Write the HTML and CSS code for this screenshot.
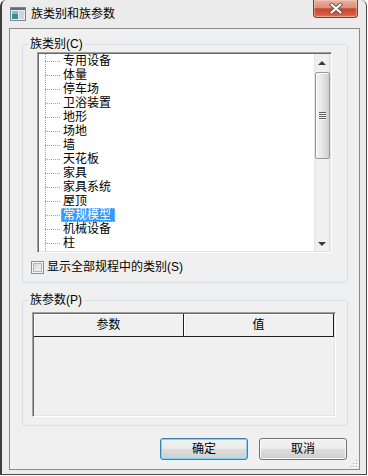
FILE: index.html
```html
<!DOCTYPE html>
<html lang="zh-CN">
<head>
    <meta charset="UTF-8">
    <title>族类别和族参数</title>
    <link rel="stylesheet" href="styles.css">
</head>
<body>
    <div class="window">
        <div class="titlebar">
            <svg class="app-icon" width="16" height="16" viewBox="0 0 16 16">
                <rect x="0.5" y="1.5" width="15" height="13" fill="#e8ecef" stroke="#7b8794"/>
                <rect x="1" y="2" width="14" height="2" fill="#5d6f7d"/>
                <rect x="2" y="5" width="6" height="8" fill="#3f8a94"/>
                <rect x="2" y="5" width="6" height="3" fill="#7cc0c4"/>
                <rect x="9" y="5" width="5" height="8" fill="#cdd6dc"/>
            </svg>
            <span class="title">族类别和族参数</span>
            <div class="close-btn">
                <svg width="14" height="11" viewBox="0 0 14 11">
                    <path d="M2.5 1.5 L11.5 9.5 M11.5 1.5 L2.5 9.5" stroke="#5b5b5b" stroke-width="4" stroke-linecap="round"/>
                    <path d="M2.5 1.5 L11.5 9.5 M11.5 1.5 L2.5 9.5" stroke="#ffffff" stroke-width="2" stroke-linecap="round"/>
                </svg>
            </div>
        </div>

        <div class="client">
            <fieldset class="group group-cats">
                <legend>族类别(C)</legend>
                <div class="listbox">
                    <ul class="tree">
                        <li><span class="branch"></span><span class="node">专用设备</span></li>
                        <li><span class="branch"></span><span class="node">体量</span></li>
                        <li><span class="branch"></span><span class="node">停车场</span></li>
                        <li><span class="branch"></span><span class="node">卫浴装置</span></li>
                        <li><span class="branch"></span><span class="node">地形</span></li>
                        <li><span class="branch"></span><span class="node">场地</span></li>
                        <li><span class="branch"></span><span class="node">墙</span></li>
                        <li><span class="branch"></span><span class="node">天花板</span></li>
                        <li><span class="branch"></span><span class="node">家具</span></li>
                        <li><span class="branch"></span><span class="node">家具系统</span></li>
                        <li><span class="branch"></span><span class="node">屋顶</span></li>
                        <li><span class="branch"></span><span class="node selected">常规模型</span></li>
                        <li><span class="branch"></span><span class="node">机械设备</span></li>
                        <li><span class="branch"></span><span class="node">柱</span></li>
                    </ul>
                    <div class="vscroll">
                        <div class="sb-btn sb-up"></div>
                        <div class="sb-thumb"><span class="grip"></span></div>
                        <div class="sb-track"></div>
                        <div class="sb-btn sb-down"></div>
                    </div>
                </div>
                <label class="check-row">
                    <span class="checkbox"></span>
                    显示全部规程中的类别(S)
                </label>
            </fieldset>

            <fieldset class="group group-params">
                <legend>族参数(P)</legend>
                <div class="listview">
                    <div class="lv-header">
                        <div class="lv-col">参数</div>
                        <div class="lv-col">值</div>
                    </div>
                    <div class="lv-body"></div>
                </div>
            </fieldset>

            <div class="buttons">
                <button class="btn btn-default">确定</button>
                <button class="btn">取消</button>
            </div>

            <svg class="size-grip" width="8" height="8" viewBox="0 0 8 8">
                <rect x="6" y="0" width="1" height="1" fill="#a3a3a3"/>
                <rect x="3" y="3" width="1" height="1" fill="#a3a3a3"/>
                <rect x="6" y="3" width="1" height="1" fill="#a3a3a3"/>
                <rect x="0" y="6" width="1" height="1" fill="#a3a3a3"/>
                <rect x="3" y="6" width="1" height="1" fill="#a3a3a3"/>
                <rect x="6" y="6" width="1" height="1" fill="#a3a3a3"/>
                <rect x="7" y="1" width="1" height="1" fill="#fff"/>
                <rect x="4" y="4" width="1" height="1" fill="#fff"/>
                <rect x="7" y="4" width="1" height="1" fill="#fff"/>
                <rect x="1" y="7" width="1" height="1" fill="#fff"/>
                <rect x="4" y="7" width="1" height="1" fill="#fff"/>
                <rect x="7" y="7" width="1" height="1" fill="#fff"/>
            </svg>
        </div>
    </div>
</body>
</html>
```

FILE: styles.css
```css
* {
    margin: 0;
    padding: 0;
    box-sizing: border-box;
}

body {
    width: 368px;
    height: 476px;
    overflow: hidden;
    background: #fff;
    font-family: "Liberation Sans", "Noto Sans CJK SC", sans-serif;
    font-size: 12px;
    color: #000;
}

/* window frame */
.window {
    width: 367px;
    height: 475px;
    background: #ececec;
    border-left: 2px solid #3e3e3e;
    border-right: 1px solid #4a4a4a;
    border-bottom: 1px solid #4a4a4a;
    border-radius: 6px 6px 0 0;
    padding: 0 6px 4px 7px;
    display: flex;
    flex-direction: column;
}

.titlebar {
    height: 28px;
    display: flex;
    align-items: center;
    margin-left: -7px;
    margin-right: -6px;
    padding-left: 8px;
}

.app-icon {
    display: block;
    margin-top: -1px;
}

.title {
    margin-left: 5px;
    line-height: 14px;
}

.close-btn {
    margin-left: auto;
    margin-right: 8px;
    align-self: flex-start;
    width: 45px;
    height: 18px;
    border: 1px solid #8a3a2c;
    border-top: none;
    border-radius: 0 0 4px 4px;
    background: linear-gradient(#eab1a3 0%, #dc8f7d 45%, #c9462e 52%, #d65a3f 85%, #e27a5c 100%);
    box-shadow: inset 0 0 0 1px rgba(255, 220, 210, 0.45);
    display: flex;
    align-items: center;
    justify-content: center;
}

.close-btn svg {
    display: block;
}

.client {
    position: relative;
    height: 442px;
    background: #f0f0f0;
    border: 1px solid #8b8b8b;
    display: flex;
    flex-direction: column;
}

/* group boxes */
.group {
    border: 1px solid #d5dfe5;
    border-radius: 3px;
    min-width: 0;
}

.group legend {
    margin-left: 5px;
    padding: 0 2px;
    line-height: 14px;
    height: 14px;
}

.group-cats {
    margin: 8px 11px 0 12px;
    padding: 0 0 8px 0;
}

.group-params {
    margin: 10px 11px 0 12px;
    padding: 0 0 8px 0;
}

/* tree list */
.listbox {
    margin: 1px 15px 0 14px;
    height: 201px;
    border: 1px solid;
    border-color: #a0a0a0 #ffffff #ffffff #a0a0a0;
    padding: 1px;
    box-shadow: inset 1px 1px 0 #696969, inset -1px -1px 0 #e3e3e3;
    background: #fff;
    display: flex;
}

.tree {
    flex: 1;
    list-style: none;
    padding-left: 6px;
    background-image: linear-gradient(#a0a0a0 50%, transparent 50%);
    background-size: 1px 2px;
    background-position: 6px 0;
    background-repeat: repeat-y;
    background-color: #fff;
}

.tree li {
    height: 14px;
    display: flex;
    align-items: center;
}

.branch {
    width: 16px;
    height: 14px;
    background-image: linear-gradient(to right, #a0a0a0 50%, transparent 50%);
    background-size: 2px 1px;
    background-position: 0 7px;
    background-repeat: repeat-x;
}

.node {
    padding: 0 4px 0 2px;
    line-height: 14px;
    height: 14px;
    white-space: nowrap;
}

.node.selected {
    background: #3399ff;
    color: #fff;
    outline: 1px dotted #9ccbff;
    outline-offset: -1px;
}

/* scrollbar */
.vscroll {
    width: 16px;
    display: flex;
    flex-direction: column;
    background: linear-gradient(to right, #e3e3e3 0, #f0f0f0 2px, #f0f0f0 13px, #e6e6e6 100%);
}

.sb-btn {
    display: flex;
    align-items: center;
    justify-content: center;
}

.sb-up {
    height: 18px;
}

.sb-down {
    height: 17px;
}

.sb-up::after,
.sb-down::after {
    content: '';
    width: 0;
    height: 0;
    border-left: 4px solid transparent;
    border-right: 4px solid transparent;
}

.sb-up::after {
    border-bottom: 4px solid #3a3a3a;
}

.sb-down::after {
    border-top: 4px solid #3a3a3a;
    margin-top: 2px;
}

.sb-thumb {
    height: 87px;
    margin-left: 1px;
    border: 1px solid #989898;
    border-radius: 2px;
    background: linear-gradient(to right, #f4f4f4 0%, #e9e9e9 40%, #d8d8d8 80%, #cbcbcb 100%);
    box-shadow: inset 1px 1px 0 #fbfbfb;
    display: flex;
    align-items: center;
    justify-content: center;
}

.grip {
    width: 7px;
    height: 8px;
    background: repeating-linear-gradient(#5c5c5c 0 1px, #f6f6f6 1px 2px);
}

.sb-track {
    flex: 1;
}

/* checkbox */
.check-row {
    margin: 8px 0 0 8px;
    height: 13px;
    display: flex;
    align-items: center;
    line-height: 13px;
}

.checkbox {
    width: 13px;
    height: 13px;
    border: 1px solid #8e8f8f;
    background: linear-gradient(135deg, #cfcfcf 0%, #e6e6e6 50%, #f7f7f7 100%);
    box-shadow: inset 0 0 0 1px #f4f4f4, inset 0 0 0 2px #b3b6b9;
    margin-right: 3px;
    flex-shrink: 0;
}

/* parameter list view */
.listview {
    margin: 5px 11px 0 9px;
    height: 105px;
    border: 1px solid;
    border-color: #a0a0a0 #ffffff #ffffff #a0a0a0;
    padding: 1px;
    box-shadow: inset 1px 1px 0 #696969, inset -1px -1px 0 #e3e3e3;
    background: #f0f0f0;
    display: flex;
    flex-direction: column;
}

.lv-header {
    height: 23px;
    display: flex;
    border-bottom: 1px solid #1e1e1e;
}

.lv-col {
    width: 150px;
    text-align: center;
    line-height: 22px;
    border-right: 1px solid #1e1e1e;
    box-shadow: inset 1px 1px 0 #ffffff;
}

.lv-body {
    flex: 1;
}

/* buttons */
.buttons {
    margin: 12px 12px 0 0;
    display: flex;
    justify-content: flex-end;
    gap: 11px;
}

.btn {
    width: 88px;
    height: 22px;
    font-family: inherit;
    font-size: 12px;
    color: #000;
    border: 1px solid #707070;
    border-radius: 3px;
    background: linear-gradient(#f2f2f2 0%, #ebebeb 48%, #dddddd 52%, #cfcfcf 100%);
    box-shadow: inset 0 0 0 1px #fbfbfb;
    line-height: 18px;
}

.btn-default {
    border-color: #3c7fb1;
    box-shadow: inset 0 0 0 1px #7fd3f7;
}

.size-grip {
    position: absolute;
    right: 1px;
    bottom: 1px;
}
```
